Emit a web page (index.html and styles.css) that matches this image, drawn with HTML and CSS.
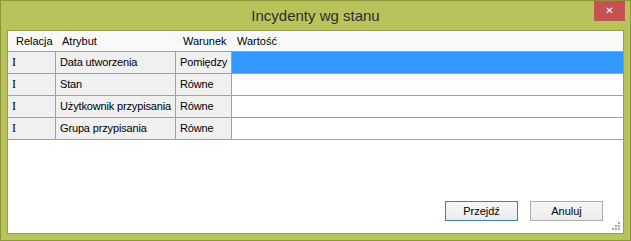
FILE: index.html
```html
<!DOCTYPE html>
<html lang="pl">
<head>
	<meta charset="UTF-8">
	<title>Incydenty wg stanu</title>
	<link rel="stylesheet" href="styles.css">
</head>
<body>
	<div class="window">
		<div class="titlebar">
			<span class="title">Incydenty wg stanu</span>
			<span class="close">&#x2715;</span>
		</div>
		<div class="client">
			<div class="grid">
				<div class="th c1">Relacja</div>
				<div class="th c2">Atrybut</div>
				<div class="th c3">Warunek</div>
				<div class="th c4">Wartość</div>

				<div class="td rel">I</div>
				<div class="td">Data utworzenia</div>
				<div class="td">Pomiędzy</div>
				<div class="td val sel"></div>

				<div class="td rel">I</div>
				<div class="td">Stan</div>
				<div class="td">Równe</div>
				<div class="td val"></div>

				<div class="td rel">I</div>
				<div class="td">Użytkownik przypisania</div>
				<div class="td">Równe</div>
				<div class="td val"></div>

				<div class="td rel">I</div>
				<div class="td">Grupa przypisania</div>
				<div class="td">Równe</div>
				<div class="td val"></div>
			</div>
			<div class="buttons">
				<button class="btn def">Przejdź</button>
				<button class="btn">Anuluj</button>
			</div>
			<svg class="grip" width="9" height="9" viewBox="0 0 9 9">
				<rect x="6" y="0" width="2" height="2" fill="#a8a8a8"/>
				<rect x="3" y="3" width="2" height="2" fill="#a8a8a8"/>
				<rect x="6" y="3" width="2" height="2" fill="#a8a8a8"/>
				<rect x="0" y="6" width="2" height="2" fill="#a8a8a8"/>
				<rect x="3" y="6" width="2" height="2" fill="#a8a8a8"/>
				<rect x="6" y="6" width="2" height="2" fill="#a8a8a8"/>
			</svg>
		</div>
	</div>
</body>
</html>
```
FILE: styles.css
```css
*{
	margin: 0;
	padding: 0;
	box-sizing: border-box;
}
body{
	font-family: "Liberation Sans", Arial, sans-serif;
	font-size: 11px;
	color: #000;
}
.window{
	width: 631px;
	height: 241px;
	border: 1px solid #8d973a;
	background-color: #b9c35c;
	padding: 0 6px 6px;
	display: flex;
	flex-direction: column;
}
.titlebar{
	height: 29px;
	display: grid;
	grid-template-columns: 1fr auto 1fr;
	align-items: start;
}
.title{
	grid-column: 2;
	font-size: 15px;
	line-height: 30px;
	color: #2e2e2e;
}
.close{
	grid-column: 3;
	justify-self: end;
	width: 31px;
	height: 20px;
	margin-right: -1px;
	background-color: #c75050;
	color: #fff;
	font-size: 10px;
	line-height: 20px;
	text-align: center;
	font-family: "DejaVu Sans", sans-serif;
}
.client{
	flex: 1;
	border: 1px solid #98a244;
	background-color: #fff;
	display: flex;
	flex-direction: column;
	position: relative;
}
.grid{
	display: grid;
	grid-template-columns: 48px 120px 56px 1fr;
}
.th{
	height: 21px;
	line-height: 20px;
	background-color: #f9f9f9;
	border-bottom: 1px solid #a0a0a0;
}
.c1{ padding-left: 8px; }
.c2{ padding-left: 6px; }
.c3{ padding-left: 7px; }
.c4{ padding-left: 5px; }
.td{
	height: 22px;
	line-height: 21px;
	padding-left: 4px;
	background-color: #f0f0f0;
	border-right: 1px solid #a0a0a0;
	border-bottom: 1px solid #a0a0a0;
	white-space: nowrap;
	letter-spacing: -0.15px;
}
.td.rel{
	font-family: "Liberation Serif", serif;
	font-size: 12px;
}
.td.val{
	background-color: #fff;
	border-right: none;
}
.td.sel{
	background-color: #3399ff;
}
.buttons{
	margin-top: auto;
	display: flex;
	justify-content: flex-end;
	gap: 12px;
	padding: 0 20px 12px 0;
}
.btn{
	width: 73px;
	height: 20px;
	font-family: "Liberation Sans", Arial, sans-serif;
	font-size: 11px;
	color: #000;
	background: linear-gradient(#f6f6f6, #ececec);
	border: 1px solid #acacac;
}
.btn.def{
	border-color: #3c7fb1;
}
.grip{
	position: absolute;
	right: 2px;
	bottom: 2px;
}
```
